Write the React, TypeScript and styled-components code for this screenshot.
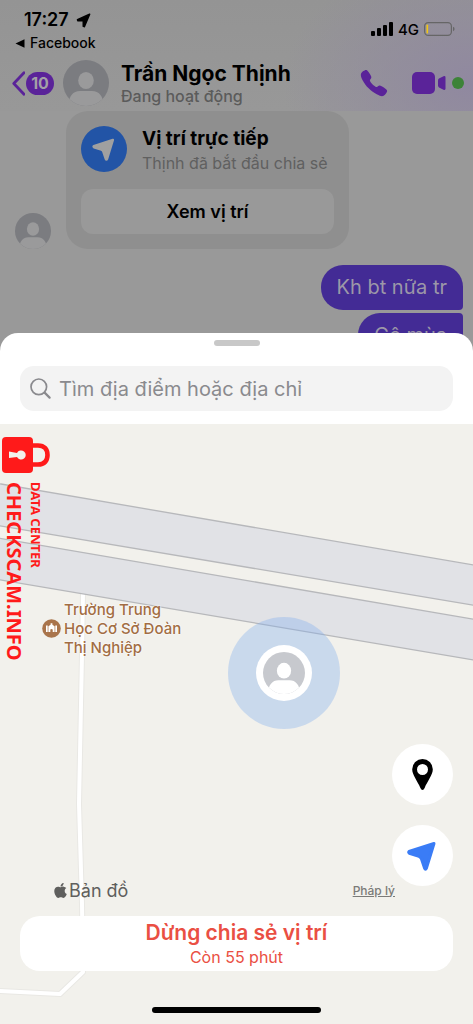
import React from "react";
import styled, { createGlobalStyle } from "styled-components";
import { FaApple } from "react-icons/fa";
import { IoCall } from "react-icons/io5";

const GlobalStyle = createGlobalStyle`
  *, *::before, *::after { box-sizing: border-box; }
  body { margin: 0; background: #999999; }
  button, input { font: inherit; color: inherit; border: 0; padding: 0; background: none; }
`;

const Page = styled.div`
  display: flex;
  flex-direction: column;
  min-height: 100vh;
  overflow: hidden;
  background: #999999;
  color: #000;
  font-family: Inter, "Liberation Sans", sans-serif;
`;

const Top = styled.header`
  height: 111px;
  background:
    radial-gradient(ellipse 190px 130px at 100% 75%, #9088a0 0%, #9088a000 100%),
    linear-gradient(#949494, #989898);
`;

const StatusBar = styled.div`
  display: flex;
  justify-content: space-between;
  height: 56px;
  padding: 9px 18px 0 15px;
`;

const Clock = styled.div`
  display: flex;
  align-items: center;
  gap: 7px;
  padding-left: 9px;
  font-size: 18px;
  line-height: 22px;
  font-weight: 600;
`;

const BackToApp = styled.a`
  display: flex;
  align-items: center;
  gap: 5px;
  color: inherit;
  text-decoration: none;
  font-size: 14px;
  line-height: 24px;
  font-weight: 500;
`;

const Signal = styled.div`
  display: flex;
  align-items: center;
  gap: 5px;
  height: 40px;
  font-size: 15px;
  font-weight: 500;
`;

const Nav = styled.nav`
  display: flex;
  align-items: center;
  height: 54px;
  padding: 0 9px 0 12px;
`;

const Back = styled.button`
  display: flex;
  align-items: center;
  gap: 1px;
  margin-right: 9px;
`;

const Count = styled.span`
  width: 28px;
  border-radius: 12px;
  background: #5a2399;
  color: #a3a0a6;
  font-size: 16px;
  line-height: 23px;
  font-weight: 700;
  text-align: center;
`;

const Contact = styled.div`
  flex: 1;
  min-width: 0;
  padding: 2px 0 0 12px;
  white-space: nowrap;
`;

const Name = styled.h1`
  margin: 0;
  font-size: 21px;
  line-height: 24px;
  font-weight: 700;
`;

const Presence = styled.div`
  color: #5b5b5b;
  font-size: 16px;
  line-height: 20px;
  font-weight: 500;
`;

const IconButton = styled.button`
  display: flex;
  color: #5a2399;
`;

const Actions = styled.div`
  display: flex;
  align-items: center;
  gap: 23px;
`;

const VideoCall = styled.div`
  display: flex;
  align-items: center;
  gap: 6px;
`;

const OnlineDot = styled.span`
  width: 12px;
  height: 12px;
  border-radius: 50%;
  background: #3d8338;
`;

const Chat = styled.main`
  display: flex;
  flex-direction: column;
  padding: 0 10px 0 15px;
`;

const Incoming = styled.div`
  display: flex;
  align-items: flex-end;
  gap: 15px;
  margin-bottom: 16px;
`;

const Card = styled.section`
  width: 283px;
  padding: 15px;
  border-radius: 22px;
  background: #8f8f8f;
`;

const CardHead = styled.div`
  display: flex;
  gap: 15px;
  margin-bottom: 13px;
  white-space: nowrap;
`;

const CardIcon = styled.span`
  display: flex;
  align-items: center;
  justify-content: center;
  width: 46px;
  height: 46px;
  flex: none;
  border-radius: 50%;
  background: #2254a6;
  color: #a0a0a0;
`;

const CardTitle = styled.h2`
  margin: 0;
  font-size: 19px;
  line-height: 25px;
  font-weight: 700;
`;

const CardText = styled.p`
  margin: 0;
  color: #606060;
  font-size: 16px;
  line-height: 25px;
`;

const CardButton = styled.button`
  display: block;
  width: 100%;
  border-radius: 12px;
  background: #999999;
  font-size: 18px;
  line-height: 45px;
  font-weight: 600;
`;

const Bubble = styled.div<{ $tail: "bottom" | "top" }>`
  align-self: flex-end;
  margin-bottom: 3px;
  padding: 0 16px;
  border-radius: ${(p) => (p.$tail === "bottom" ? "22px 22px 4px 22px" : "22px 4px 22px 22px")};
  background: #432b95;
  color: #9c97a8;
  font-size: 20px;
  line-height: 45px;
`;

const Sheet = styled.section`
  position: relative;
  display: flex;
  flex: 1;
  flex-direction: column;
  margin-top: -28px;
  border-radius: 18px 18px 0 0;
  background: #fff;
`;

const Handle = styled.div`
  width: 46px;
  height: 6px;
  margin: 7px auto 20px;
  border-radius: 3px;
  background: #c8c8c8;
`;

const SearchBox = styled.label`
  display: flex;
  align-items: center;
  gap: 8px;
  height: 45px;
  margin: 0 20px 13px;
  padding: 0 10px;
  border-radius: 14px;
  background: #f3f3f3;
  color: #8a8a8e;
`;

const SearchInput = styled.input`
  flex: 1;
  min-width: 0;
  height: 45px;
  outline: 0;
  font-size: 20px;
  &::placeholder { color: #8a8a8e; opacity: 1; }
`;

const MapArea = styled.div`
  position: relative;
  display: flex;
  flex: 1;
  flex-direction: column;
  justify-content: flex-end;
  min-height: 560px;
  padding: 0 20px 11px;
  overflow: hidden;
  background: #f2f1ec;
`;

const Roads = styled.svg`
  position: absolute;
  top: 0;
  left: 0;
  width: 100%;
  height: 100%;
`;

const Watermark = styled.div`
  position: absolute;
  top: 13px;
  left: 2px;
  color: #ff1a1a;
  font-family: "Noto Sans", "Open Sans", sans-serif;
  font-weight: 700;
  white-space: nowrap;
`;

const LockIcon = styled.svg`
  display: block;
`;

const WatermarkText = styled.div`
  width: 44px;
  margin-top: 9px;
  writing-mode: vertical-rl;
`;

const WatermarkTag = styled.div`
  font-size: 13px;
  line-height: 20px;
`;

const WatermarkSite = styled.div`
  font-size: 20px;
  line-height: 24px;
`;

const Place = styled.div`
  position: absolute;
  top: 176px;
  left: 42px;
  display: flex;
  align-items: center;
  gap: 3px;
  color: #a26d43;
  font-size: 15px;
  line-height: 19px;
  font-weight: 500;
  text-shadow: 0 0 2px #fff, 0 0 2px #fff;
`;

const Accuracy = styled.div`
  position: absolute;
  top: 193px;
  left: 228px;
  display: flex;
  align-items: center;
  justify-content: center;
  width: 112px;
  height: 112px;
  border-radius: 50%;
  background: #7eacee59;
`;

const UserPin = styled.div`
  display: flex;
  padding: 7px;
  border-radius: 50%;
  background: #fff;
`;

const Controls = styled.div`
  position: relative;
  display: flex;
  flex-direction: column;
  align-items: flex-end;
  gap: 20px;
`;

const RoundButton = styled.button`
  display: flex;
  align-items: center;
  justify-content: center;
  width: 61px;
  height: 61px;
  border-radius: 50%;
  background: #fff;
`;

const Credits = styled.div`
  position: relative;
  display: flex;
  align-items: center;
  justify-content: space-between;
  height: 24px;
  margin: -8px 58px 14px 32px;
`;

const Brand = styled.div`
  display: flex;
  align-items: center;
  color: #5f5f5d;
  font-size: 18px;
`;

const Legal = styled.a`
  color: #7b7b78;
  font-size: 12px;
  font-weight: 500;
`;

const StopButton = styled.button`
  position: relative;
  padding: 4px 0 3px;
  border-radius: 20px;
  background: #fff;
  color: #ea4f43;
`;

const StopTitle = styled.span`
  display: block;
  font-size: 21px;
  line-height: 26px;
  font-weight: 600;
`;

const StopTime = styled.span`
  display: block;
  font-size: 16px;
  line-height: 22px;
`;

const HomeIndicator = styled.div`
  position: relative;
  width: 169px;
  height: 6px;
  margin: 36px auto 0;
  border-radius: 3px;
  background: #000;
`;

function Avatar({ size, disc, person }: { size: number; disc: string; person: string }) {
  const id = React.useId();
  return (
    <svg width={size} height={size} viewBox="0 0 46 46" aria-hidden="true">
      <clipPath id={id}>
        <circle cx="23" cy="23" r="23" />
      </clipPath>
      <g clipPath={`url(#${id})`}>
        <rect width="46" height="46" fill={disc} />
        <ellipse cx="23" cy="20.5" rx="7.8" ry="8.6" fill={person} />
        <path d="M5 46C6 36 10 31 17 31H29C36 31 40 36 41 46Z" fill={person} />
      </g>
    </svg>
  );
}

function LocationArrow({ size, color }: { size: number; color: string }) {
  return (
    <svg width={size} height={size} viewBox="1.5 0 30 30" overflow="visible" aria-hidden="true">
      <path
        d="M27.5 2.5L2.5 10.5C2 11 2 11.7 2.8 12.2L12.5 15.3Q14.3 16.2 15 18L18.2 27.5C18.6 28.5 19.4 28.4 19.8 27.5Z"
        fill={color}
        stroke={color}
        strokeWidth="3"
        strokeLinejoin="round"
      />
    </svg>
  );
}

export default function App() {
  return (
    <Page>
      <GlobalStyle />
      <Top>
        <StatusBar>
          <div>
            <Clock>
              17:27
              <svg width="15" height="15" viewBox="0 0 15 15" aria-hidden="true">
                <path d="M13.6 1.2L1.5 6.7L2 7.8H7.3V13.2L8.3 13.6Z" stroke="#000" strokeWidth="1.6" strokeLinejoin="round" />
              </svg>
            </Clock>
            <BackToApp href="#facebook">
              <svg width="10" height="9" viewBox="0 0 10 9" aria-hidden="true">
                <path d="M.5 4.5L9.5 .3V8.7Z" />
              </svg>
              Facebook
            </BackToApp>
          </div>
          <Signal>
            <svg width="22" height="14" viewBox="0 0 22 14" aria-hidden="true">
              <rect x="0" y="9" width="4" height="5" rx="1" />
              <rect x="6" y="6" width="4" height="8" rx="1" />
              <rect x="12" y="3" width="4" height="11" rx="1" />
              <rect x="18" y="0" width="4" height="14" rx="1" />
            </svg>
            4G
            <svg width="31" height="14" viewBox="0 0 31 14" aria-hidden="true">
              <rect x=".6" y=".6" width="26.8" height="12.8" rx="3.6" fill="none" stroke="#666" strokeWidth="1.2" />
              <rect x="2.5" y="2.5" width="1.6" height="9" rx=".8" fill="#f3c614" />
              <path d="M29 4.8Q30.6 5.4 30.6 7T29 9.2Z" fill="#666" />
            </svg>
          </Signal>
        </StatusBar>
        <Nav>
          <Back aria-label="Quay lại">
            <svg width="13" height="25" viewBox="0 0 13 25" fill="none" aria-hidden="true">
              <path d="M12 1.8L1.8 12.5L12 23.2" stroke="#5a2399" strokeWidth="2.8" strokeLinecap="round" strokeLinejoin="round" />
            </svg>
            <Count>10</Count>
          </Back>
          <Avatar size={46} disc="#7b7c80" person="#9a9a9b" />
          <Contact>
            <Name>Trần Ngọc Thịnh</Name>
            <Presence>Đang hoạt động</Presence>
          </Contact>
          <Actions>
            <IconButton aria-label="Gọi thoại">
              <IoCall size={30} />
            </IconButton>
            <VideoCall>
              <IconButton aria-label="Gọi video">
                <svg width="34" height="22" viewBox="0 0 34 22" fill="currentColor" aria-hidden="true">
                  <rect width="23" height="22" rx="5" />
                  <path d="M26 8.5Q26 7.2 27 6.6L31.5 4.3Q33.5 3.6 33.5 5.5V16.5Q33.5 18.4 31.5 17.7L27 15.4Q26 14.8 26 13.5Z" />
                </svg>
              </IconButton>
              <OnlineDot />
            </VideoCall>
          </Actions>
        </Nav>
      </Top>

      <Chat>
        <Incoming>
          <Avatar size={36} disc="#7b7c80" person="#9a9a9b" />
          <Card>
            <CardHead>
              <CardIcon>
                <LocationArrow size={23} color="#a0a0a0" />
              </CardIcon>
              <div>
                <CardTitle>Vị trí trực tiếp</CardTitle>
                <CardText>Thịnh đã bắt đầu chia sẻ</CardText>
              </div>
            </CardHead>
            <CardButton>Xem vị trí</CardButton>
          </Card>
        </Incoming>
        <Bubble $tail="bottom">Kh bt nữa tr</Bubble>
        <Bubble $tail="top">Gê mùa</Bubble>
      </Chat>

      <Sheet>
        <Handle />
        <SearchBox>
          <svg width="21" height="21" viewBox="0 0 21 21" fill="none" stroke="currentColor" strokeLinecap="round" aria-hidden="true">
            <circle cx="8.8" cy="8.8" r="7.8" strokeWidth="1.7" />
            <path d="M14.6 14.6L19.6 19.6" strokeWidth="2.2" />
          </svg>
          <SearchInput type="text" aria-label="Tìm kiếm" placeholder="Tìm địa điểm hoặc địa chỉ" />
        </SearchBox>

        <MapArea>
          <Roads viewBox="0 0 473 600" preserveAspectRatio="xMinYMin slice" aria-hidden="true">
            <g fill="none" strokeLinejoin="round">
              <path d="M83 168L82 230L79 380L82 480L83 548L60 570L-2 567" stroke="#e9e8e4" strokeWidth="6" />
              <path d="M83 168L82 230L79 380L82 480L83 548L60 570L-2 567" stroke="#fff" strokeWidth="4" />
            </g>
            <path d="M-2 59.5L475 141.3V181.5L-2 101.5Z" fill="#e1e2e6" stroke="#b7b8bb" strokeWidth="1.3" />
            <path d="M-2 114L475 195.5V236.3L-2 155.5Z" fill="#e1e2e6" stroke="#b7b8bb" strokeWidth="1.3" />
          </Roads>

          <Place>
            <svg width="19" height="19" viewBox="0 0 19 19" aria-hidden="true">
              <circle cx="9.5" cy="9.5" r="9.3" fill="#a9744b" />
              <path d="M4 6.5H5.7V13H4ZM13.3 6.5H15V13H13.3ZM6.4 13V7.2L8.6 5.8V4.2H10.4V5.8L12.6 7.2V13H10.7V10.5Q9.5 9.3 8.3 10.5V13Z" fill="#fff" />
            </svg>
            <div>
              Trường Trung
              <br />
              Học Cơ Sở Đoàn
              <br />
              Thị Nghiệp
            </div>
          </Place>

          <Accuracy>
            <UserPin>
              <Avatar size={42} disc="#c7c9ce" person="#ffffff" />
            </UserPin>
          </Accuracy>

          <Watermark>
            <LockIcon width="48" height="36" viewBox="0 0 48 36" aria-hidden="true">
              <path d="M29 8.5H36C42.5 8.5 45.5 12.5 45.5 18S42.5 27.5 36 27.5H29" fill="none" stroke="#ff1a1a" strokeWidth="4.6" />
              <rect width="31" height="36" rx="4" fill="#ff1a1a" />
              <path d="M7 14.5L15 16A4.6 4.6 0 1 1 15 20L7 21Z" fill="#f2f1ec" />
            </LockIcon>
            <WatermarkText>
              <WatermarkTag>DATA CENTER</WatermarkTag>
              <WatermarkSite>CHECKSCAM.INFO</WatermarkSite>
            </WatermarkText>
          </Watermark>

          <Controls>
            <RoundButton aria-label="Ghim vị trí">
              <svg width="21" height="31" viewBox="0 0 21 31" aria-hidden="true">
                <path fillRule="evenodd" d="M10.5 0A10.3 10.3 0 0 1 20.8 10.3C20.8 16 15.5 22 12.6 29Q11.8 31 10.5 31T8.4 29C5.5 22 .2 16 .2 10.3A10.3 10.3 0 0 1 10.5 0ZM10.5 5A5.5 5.5 0 1 0 10.5 16A5.5 5.5 0 0 0 10.5 5Z" />
              </svg>
            </RoundButton>
            <RoundButton aria-label="Vị trí của tôi">
              <LocationArrow size={30} color="#3a7cf6" />
            </RoundButton>
          </Controls>

          <Credits>
            <Brand>
              <FaApple size={17} />
              Bản đồ
            </Brand>
            <Legal href="#legal">Pháp lý</Legal>
          </Credits>

          <StopButton>
            <StopTitle>Dừng chia sẻ vị trí</StopTitle>
            <StopTime>Còn 55 phút</StopTime>
          </StopButton>
          <HomeIndicator />
        </MapArea>
      </Sheet>
    </Page>
  );
}
